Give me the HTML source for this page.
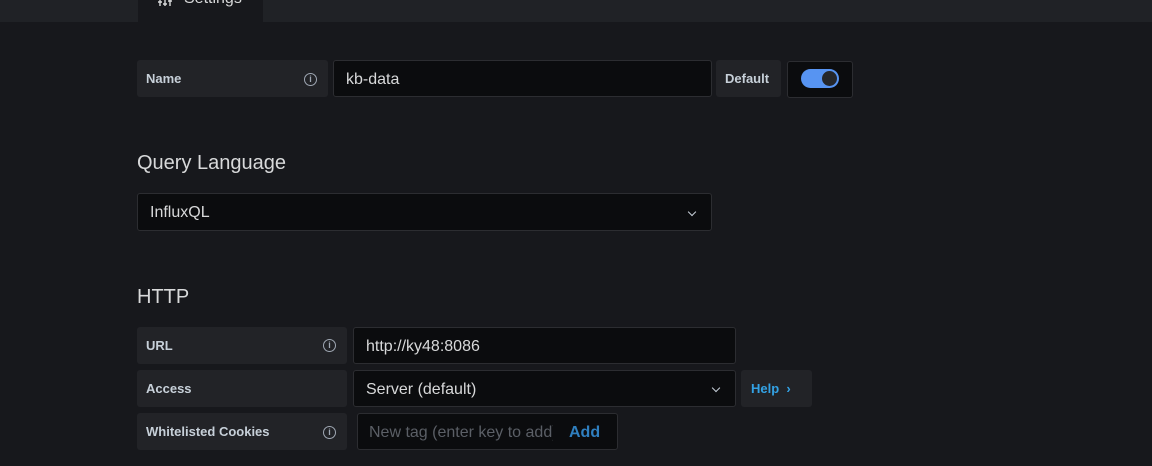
<!DOCTYPE html>
<html><head><meta charset="utf-8"><style>
*{box-sizing:border-box;margin:0;padding:0}
body{width:1152px;height:466px;background:#17181c;font-family:"Liberation Sans",sans-serif;position:relative;overflow:hidden;color:#d8d9da}
.a{position:absolute}
.lbl{background:#222327;border-radius:3px;font-size:13px;font-weight:bold;color:#c7d0d9;display:flex;align-items:center;padding-left:9px}
.inp{background:#0b0c0e;border:1px solid #2c2d31;border-radius:3px;font-size:16px;color:#d8d9da;display:flex;align-items:center;padding-left:12px;padding-top:2px}
.info{position:absolute;width:13px;height:13px;border:1.3px solid #9fa7b3;border-radius:50%;font-size:9px;color:#9fa7b3;text-align:center;line-height:11px;font-weight:bold}
.chev{position:absolute;width:6px;height:6px;border-right:1.5px solid #c7d0d9;border-bottom:1.5px solid #c7d0d9;transform:rotate(45deg)}
h2{position:absolute;font-weight:normal;font-size:20px;color:#d8d9da}
</style></head><body>
<div class="a" style="left:0;top:0;width:1152px;height:22px;background:#202226"></div>
<div class="a" style="left:138px;top:0;width:125px;height:22px;background:#17181c;font-size:16px;color:#d8d9da">
<svg style="position:absolute;left:20px;top:0" width="14" height="6"><path d="M2 0v6M7 0v6M12 0v6M0 2h4M5 4h4M10 1h4" stroke="#d8d9da" stroke-width="1.4"/></svg><span style="position:absolute;left:46px;top:-10px">Settings</span></div>

<div class="a lbl" style="left:137px;top:60px;width:191px;height:37px">Name</div>
<div class="info" style="left:304px;top:73px">i</div>
<div class="a inp" style="left:333px;top:60px;width:379px;height:37px">kb-data</div>
<div class="a lbl" style="left:716px;top:60px;width:65px;height:37px">Default</div>
<div class="a" style="left:787px;top:61px;width:66px;height:37px;background:#0b0c0e;border:1px solid #2c2d31;border-radius:3px"></div>
<div class="a" style="left:801px;top:69px;width:38px;height:19px;background:#5794f2;border-radius:10px"></div>
<div class="a" style="left:822px;top:71px;width:15px;height:15px;background:#25272b;border-radius:50%"></div>

<h2 style="left:137px;top:152px">Query Language</h2>
<div class="a inp" style="left:137px;top:193px;width:575px;height:38px">InfluxQL</div>
<div class="chev" style="left:689px;top:209px"></div>

<h2 style="left:137px;top:286px">HTTP</h2>
<div class="a lbl" style="left:137px;top:327px;width:210px;height:37px">URL</div>
<div class="info" style="left:323px;top:339px">i</div>
<div class="a inp" style="left:353px;top:327px;width:383px;height:37px">http://ky48:8086</div>

<div class="a lbl" style="left:137px;top:370px;width:210px;height:37px">Access</div>
<div class="a inp" style="left:353px;top:370px;width:383px;height:37px">Server (default)</div>
<div class="chev" style="left:713px;top:385px"></div>
<div class="a lbl" style="left:741px;top:370px;width:71px;height:37px;color:#33a2e5;padding-left:10px">Help&nbsp;&nbsp;›</div>

<div class="a lbl" style="left:137px;top:413px;width:210px;height:37px">Whitelisted Cookies</div>
<div class="info" style="left:323px;top:426px">i</div>
<div class="a inp" style="left:357px;top:413px;width:261px;height:37px;color:#5b5f66;overflow:hidden;white-space:nowrap;padding-left:11px"><span style="display:inline-block;width:184px;overflow:hidden">New tag (enter key to add)</span><span style="color:#2f7fbf;font-weight:bold;margin-left:16px">Add</span></div>
</body></html>
